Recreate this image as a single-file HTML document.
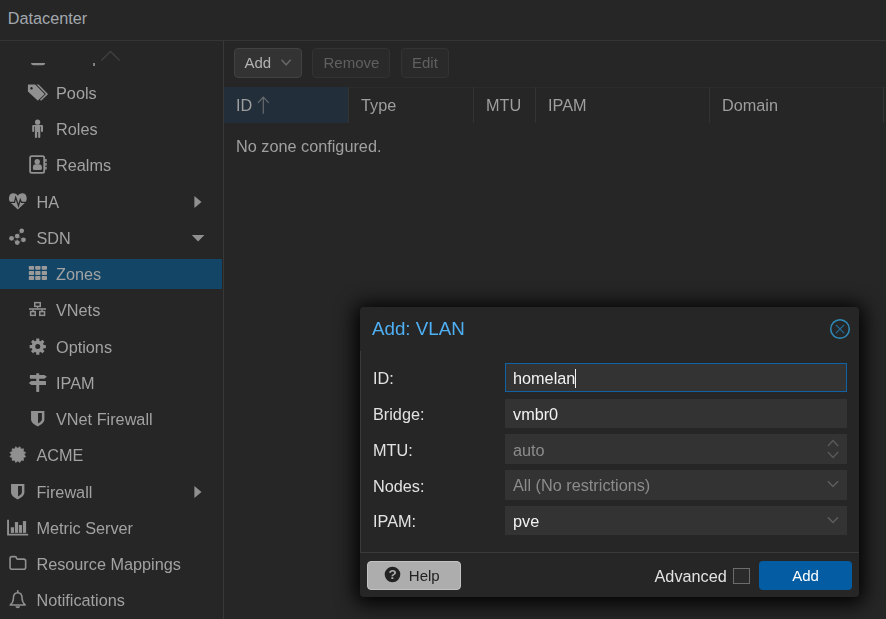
<!DOCTYPE html>
<html>
<head>
<meta charset="utf-8">
<title>Datacenter - SDN Zones</title>
<style>
html,body{margin:0;padding:0;}
body{width:886px;height:619px;overflow:hidden;background:#262626;font-family:"Liberation Sans",Arial,Helvetica,sans-serif;font-size:16.25px;color:#b0b0b0;position:relative;}
*{box-sizing:border-box;}
.abs{position:absolute;}
.gs{will-change:transform;}
#hdr{left:7.7px;top:7px;height:22px;line-height:22px;color:#a2a8ae;font-size:16.25px;white-space:nowrap;}
#hline{left:0;top:40px;width:886px;height:1px;background:#353535;}
#side{left:0;top:41px;width:223px;height:578px;overflow:hidden;}
#sideborder{left:223px;top:41px;width:1px;height:578px;background:#383838;}
#sideclip{left:0;top:21.5px;width:223px;height:557px;overflow:hidden;}
.row{position:absolute;left:0;width:222px;height:36.25px;line-height:36.25px;white-space:nowrap;color:#a2a2a2;}
.row .t{position:absolute;top:0;}
.row.sel{background:#134566;height:30px;line-height:30px;}
.l1 .t{left:36.4px;}
.l2 .t{left:56px;}
#tb{left:224px;top:41px;width:662px;height:46px;}
.btn{position:absolute;height:30px;border:1px solid #424242;border-radius:4px;background:#333333;color:#b2b2b2;line-height:28px;font-size:15px;white-space:nowrap;}
.btn.dis{background:#2a2a2a;border-color:#333333;color:#606060;}
#gridhdr{left:224px;top:87px;width:662px;height:36px;border-top:1px solid #2b2b2b;}
.col{position:absolute;top:-1px;height:36px;line-height:36px;color:#9e9e9e;border-right:1px solid #333333;padding-left:12px;white-space:nowrap;}
#empty{left:236px;top:135px;line-height:22px;color:#a0a0a0;white-space:nowrap;}
#modal{left:360px;top:307px;width:498px;height:289px;}
#mframe{left:-0.5px;top:-0.3px;width:499.5px;height:290.2px;background:#262626;border-radius:4px;box-shadow:0 2px 19px 5px rgba(0,0,0,0.95);}
#mtitle{left:12px;top:10px;line-height:24px;font-size:18.75px;color:#4fb0f4;white-space:nowrap;}
#mbody{left:0;top:44px;width:499px;height:202px;border-left:1px solid #3a3a3a;border-bottom:1px solid #3a3a3a;}
.lab{position:absolute;left:13px;color:#e2e2e2;height:30px;line-height:30px;white-space:nowrap;}
.inp{position:absolute;left:145px;width:342px;height:29px;background:#333333;color:#f2f2f2;line-height:31.4px;padding-left:8px;white-space:nowrap;}
.inp.ph{color:#8c8c8c;}
.inp.foc{border:1px solid #1062a4;line-height:29.6px;padding-left:7px;}
.caret{display:inline-block;width:1px;height:19px;background:#f2f2f2;vertical-align:-4px;margin-left:0;}
#help{left:7px;top:254px;width:94px;height:29px;background:#adadad;border:1px solid #c2c2c2;border-radius:4px;color:#222;font-size:15px;line-height:27px;}
#adv{left:294.5px;top:258px;line-height:22px;color:#e2e2e2;white-space:nowrap;}
#chk{left:373.2px;top:260.8px;width:16.8px;height:16.6px;border:1.5px solid #6c6c6c;background:#2b2b2b;}
#addb{left:399px;top:254px;width:93px;height:29px;background:#045da3;border-radius:4px;color:#fff;font-size:15px;line-height:29px;text-align:center;}
</style>
</head>
<body>
<div id="hdr" class="abs">Datacenter</div>
<div id="hline" class="abs"></div>

<div id="side" class="abs gs">
  <svg class="abs" style="left:95px;top:5px" width="32" height="18" viewBox="95 46 32 18"><polyline points="101.4,60.6 110.5,51.4 119.7,60.6" fill="none" stroke="#3f3f3f" stroke-width="1.4"/></svg>
  <div id="sideclip" class="abs">
    <div class="row l2" style="top:-23.2px"><span class="t">Groups</span></div>
    <div class="row l2" style="top:12.4px"><span class="t">Pools</span></div>
    <div class="row l2" style="top:48.6px"><span class="t">Roles</span></div>
    <div class="row l2" style="top:84.9px"><span class="t">Realms</span></div>
    <div class="row l1" style="top:121.1px"><span class="t">HA</span></div>
    <div class="row l1" style="top:157.4px"><span class="t">SDN</span></div>
    <div class="row l2 sel" style="top:196.5px"><span class="t">Zones</span></div>
    <div class="row l2" style="top:229.9px"><span class="t">VNets</span></div>
    <div class="row l2" style="top:266.1px"><span class="t">Options</span></div>
    <div class="row l2" style="top:302.4px"><span class="t">IPAM</span></div>
    <div class="row l2" style="top:338.6px"><span class="t">VNet Firewall</span></div>
    <div class="row l1" style="top:374.9px"><span class="t">ACME</span></div>
    <div class="row l1" style="top:411.1px"><span class="t">Firewall</span></div>
    <div class="row l1" style="top:447.4px"><span class="t">Metric Server</span></div>
    <div class="row l1" style="top:483.6px"><span class="t">Resource Mappings</span></div>
    <div class="row l1" style="top:519.9px"><span class="t">Notifications</span></div>
    <svg class="abs" style="left:0;top:-0.5px" width="222" height="557" viewBox="0 62 222 557"><g fill="#909090"><rect x="31" y="55" width="14.2" height="10.2" rx="2.5"/><circle cx="38" cy="52" r="3.5"/></g>
<g fill="#909090"><path fill-rule="evenodd" d="M28.6,84.6 H35.2 L44.3,93.7 Q44.7,94.1 44.3,94.5 L38.2,100.2 Q37.6,100.6 37.1,100.1 L27.9,91.4 V85.3 Q27.9,84.6 28.6,84.6 Z M31.5,87 a1.25,1.25 0 1 0 0.01,0 Z"/><path d="M36.6,84.6 H38.6 L47.7,93.7 Q48.1,94.1 47.7,94.5 L41.6,100.2 Q41,100.6 40.4,100.2 L40.0,99.8 L45.4,94.6 Q45.9,94.1 45.4,93.6 Z"/></g>
<g fill="#909090"><circle cx="37.6" cy="122.2" r="2.6"/><path d="M33.4,124.9 H41.8 Q43,124.9 43,126.1 V131 Q43,132 42,132 Q41,132 41,131 V126.6 H40.3 V137.1 Q40.3,138.1 39.2,138.1 Q38.15,138.1 38.15,137.1 V132 H37.15 V137.1 Q37.15,138.1 36.05,138.1 Q34.9,138.1 34.9,137.1 V126.6 H34.2 V131 Q34.2,132 33.2,132 Q32.2,132 32.2,131 V126.1 Q32.2,124.9 33.4,124.9 Z"/></g>
<g fill="#909090"><rect x="30.1" y="156.1" width="14.1" height="16.8" rx="1.6" fill="none" stroke="#909090" stroke-width="1.8"/><rect x="45.1" y="159" width="1.6" height="2.8"/><rect x="45.1" y="162.9" width="1.6" height="2.8"/><rect x="45.1" y="166.7" width="1.6" height="2.8"/><circle cx="37.2" cy="161.8" r="2.7"/><path d="M32.9,168.4 V167.3 Q32.9,164.3 35.9,164.3 H38.9 Q41.9,164.3 41.9,167.3 V168.4 Q41.9,169.9 40.4,169.9 H34.4 Q32.9,169.9 32.9,168.4 Z"/></g>
<g><path fill="#909090" d="M17.85,209.6 L10.4,202.4 C8.0,200.0 8.4,193.3 13.3,193.3 C15.5,193.3 17,194.5 17.85,195.7 C18.7,194.5 20.2,193.3 22.4,193.3 C27.3,193.3 27.7,200.0 25.3,202.4 Z"/><path fill="none" stroke="#262626" stroke-width="1.25" stroke-linejoin="miter" d="M8,202.3 H14.5 L15.7,197.4 L18.5,205.8 L20.3,199.6 L21.4,202.3 H28"/></g>
<g><line x1="21.7" y1="230.8" x2="17.2" y2="236.0" stroke="#6a6a6a" stroke-width="0.7"/><line x1="17.2" y1="236.0" x2="11.5" y2="238.3" stroke="#6a6a6a" stroke-width="0.7"/><line x1="17.2" y1="236.0" x2="23.5" y2="239.8" stroke="#6a6a6a" stroke-width="0.7"/><line x1="17.2" y1="236.0" x2="17.2" y2="242.6" stroke="#6a6a6a" stroke-width="0.7"/><line x1="11.5" y1="238.3" x2="17.2" y2="242.6" stroke="#6a6a6a" stroke-width="0.7"/><line x1="23.5" y1="239.8" x2="17.2" y2="242.6" stroke="#6a6a6a" stroke-width="0.7"/><circle cx="21.7" cy="230.8" r="2.35" fill="#909090"/><circle cx="17.2" cy="236.0" r="2.35" fill="#909090"/><circle cx="11.5" cy="238.3" r="2.35" fill="#909090"/><circle cx="23.5" cy="239.8" r="2.35" fill="#909090"/><circle cx="17.2" cy="242.6" r="2.35" fill="#909090"/></g>
<g fill="#9a9a9a"><rect x="28.8" y="265.9" width="5.3" height="3.9" rx="0.7"/><rect x="28.8" y="271.1" width="5.3" height="3.9" rx="0.7"/><rect x="28.8" y="276.1" width="5.3" height="3.9" rx="0.7"/><rect x="35.2" y="265.9" width="5.3" height="3.9" rx="0.7"/><rect x="35.2" y="271.1" width="5.3" height="3.9" rx="0.7"/><rect x="35.2" y="276.1" width="5.3" height="3.9" rx="0.7"/><rect x="41.7" y="265.9" width="5.3" height="3.9" rx="0.7"/><rect x="41.7" y="271.1" width="5.3" height="3.9" rx="0.7"/><rect x="41.7" y="276.1" width="5.3" height="3.9" rx="0.7"/></g>
<g fill="none" stroke="#909090" stroke-width="1.5"><rect x="34.75" y="302.65" width="5.5" height="3.7"/><rect x="30.65" y="311.65" width="4.6" height="3.7"/><rect x="39.75" y="311.65" width="4.8" height="3.7"/></g><g fill="#909090"><rect x="29" y="308.2" width="17" height="1.6"/><rect x="36.9" y="307" width="1.3" height="1.3"/><rect x="32.2" y="309.7" width="1.6" height="1.3"/><rect x="41.2" y="309.7" width="1.6" height="1.3"/></g>
<g fill="#909090"><path fill-rule="evenodd" d="M31.65,346.6 a6.1,6.1 0 1 0 12.2,0 a6.1,6.1 0 1 0 -12.2,0 Z M35.25,346.6 a2.5,2.5 0 1 1 5.0,0 a2.5,2.5 0 1 1 -5.0,0 Z"/><rect x="36.15" y="338.5" width="3.2" height="3.2" rx="0.5" transform="rotate(0.0 37.75 346.6)"/><rect x="36.15" y="338.5" width="3.2" height="3.2" rx="0.5" transform="rotate(45.0 37.75 346.6)"/><rect x="36.15" y="338.5" width="3.2" height="3.2" rx="0.5" transform="rotate(90.0 37.75 346.6)"/><rect x="36.15" y="338.5" width="3.2" height="3.2" rx="0.5" transform="rotate(135.0 37.75 346.6)"/><rect x="36.15" y="338.5" width="3.2" height="3.2" rx="0.5" transform="rotate(180.0 37.75 346.6)"/><rect x="36.15" y="338.5" width="3.2" height="3.2" rx="0.5" transform="rotate(225.0 37.75 346.6)"/><rect x="36.15" y="338.5" width="3.2" height="3.2" rx="0.5" transform="rotate(270.0 37.75 346.6)"/><rect x="36.15" y="338.5" width="3.2" height="3.2" rx="0.5" transform="rotate(315.0 37.75 346.6)"/></g>
<g fill="#909090"><rect x="36.25" y="373.2" width="2.95" height="18.7" rx="0.6"/><path d="M30.3,374.9 H44.4 L46.9,376.8 L44.4,378.7 H30.3 Q29.9,378.7 29.9,378.3 V375.3 Q29.9,374.9 30.3,374.9 Z"/><path d="M45.6,381 H31.3 L28.8,383.05 L31.3,385.1 H45.6 Q46,385.1 46,384.7 V381.4 Q46,381 45.6,381 Z"/></g><rect x="36" y="378.7" width="3.5" height="0.9" fill="#262626" opacity="0.0"/>
<g transform="translate(0 0)"><path fill="#909090" fill-rule="evenodd" d="M31.05,410.9 H44.4 V419.3 C44.4,422.6 41.2,424.9 37.75,426.4 C34.3,424.9 31.05,422.6 31.05,419.3 Z M38.05,413.1 V423.4 C40.2,422.3 41.9,420.8 41.9,419.2 V413.1 Z"/></g>
<polygon fill="#909090" stroke="#909090" stroke-width="0.6" stroke-linejoin="round" points="19.92,446.68 21.00,449.06 23.60,448.80 23.34,451.40 25.72,452.48 24.20,454.60 25.72,456.72 23.34,457.80 23.60,460.40 21.00,460.14 19.92,462.52 17.80,461.00 15.68,462.52 14.60,460.14 12.00,460.40 12.26,457.80 9.88,456.72 11.40,454.60 9.88,452.48 12.26,451.40 12.00,448.80 14.60,449.06 15.68,446.68 17.80,448.20"/>
<g transform="translate(-20 73)"><path fill="#909090" fill-rule="evenodd" d="M31.05,410.9 H44.4 V419.3 C44.4,422.6 41.2,424.9 37.75,426.4 C34.3,424.9 31.05,422.6 31.05,419.3 Z M38.05,413.1 V423.4 C40.2,422.3 41.9,420.8 41.9,419.2 V413.1 Z"/></g>
<g fill="#909090"><path d="M7.1,519.8 H9.0 V533.8 H28.15 V535.4 H7.1 Z"/><rect x="10.8" y="527.25" width="3.2" height="5.65"/><rect x="14.9" y="522.05" width="3.2" height="10.85"/><rect x="18.9" y="525" width="3.1" height="7.9"/><rect x="22.9" y="521.05" width="3.2" height="11.85"/></g>
<path fill="none" stroke="#909090" stroke-width="1.6" stroke-linejoin="round" d="M12,556.6 H14.8 Q16.5,556.6 16.5,558 Q16.5,559.1 17.8,559.1 H23.7 Q25.65,559.1 25.65,561.1 V567.2 Q25.65,569.2 23.7,569.2 H12 Q10.05,569.2 10.05,567.2 V558.6 Q10.05,556.6 12,556.6 Z"/>
<g><path fill="none" stroke="#909090" stroke-width="1.5" stroke-linejoin="round" d="M17.75,592.8 C14.2,592.8 13.4,596 13.4,598.5 C13.4,601.5 12.2,603.3 10.2,605 H25.3 C23.3,603.3 22.1,601.5 22.1,598.5 C22.1,596 21.3,592.8 17.75,592.8 Z"/><line x1="17.75" y1="590.8" x2="17.75" y2="592.5" stroke="#909090" stroke-width="1.6" stroke-linecap="round"/><path fill="#909090" d="M15.3,606.2 A2.5,2.6 0 0 0 20.2,606.2 Z"/></g>
<g fill="#909090"><polygon points="194.4,195.9 201.5,201.95 194.4,208"/><polygon points="191.8,235 204.4,235 198.1,241.6"/><polygon points="194.4,485.9 201.5,491.95 194.4,498"/></g></svg>
  </div>
</div>
<div id="sideborder" class="abs"></div>

<div id="tb" class="abs gs">
  <div class="btn" style="left:10px;top:7px;width:68px;padding-left:9.5px;">Add<svg class="abs" style="left:45px;top:8px" width="14" height="10" viewBox="0 0 14 10"><polyline points="1.5,2.7 6.1,7.9 10.7,2.7" fill="none" stroke="#666666" stroke-width="1.6"/></svg></div>
  <div class="btn dis" style="left:88px;top:7px;width:78px;padding-left:10.5px;">Remove</div>
  <div class="btn dis" style="left:177px;top:7px;width:48px;padding-left:10px;">Edit</div>
</div>

<div id="gridhdr" class="abs gs">
  <div class="col" style="left:0;width:125px;background:#222f3a;">ID<svg class="abs" style="left:32px;top:8px" width="14" height="20" viewBox="0 0 14 20"><path d="M7.3,2.1 V18.8 M1.9,7.9 L7.3,2.1 L12.7,7.9" fill="none" stroke="#666a6e" stroke-width="1.2"/></svg></div>
  <div class="col" style="left:125px;width:125px;">Type</div>
  <div class="col" style="left:250px;width:62px;">MTU</div>
  <div class="col" style="left:312px;width:174px;">IPAM</div>
  <div class="col" style="left:486px;width:174px;">Domain</div>
</div>
<div id="empty" class="abs gs">No zone configured.</div>

<div id="modal" class="abs gs">
  <div id="mframe" class="abs"></div>
  <div id="mtitle" class="abs">Add: VLAN</div>
  <svg class="abs" style="left:468px;top:10px" width="24" height="24" viewBox="0 0 24 24"><circle cx="12" cy="12" r="9.3" fill="none" stroke="#2f8cba" stroke-width="1.5"/><path d="M7.9,7.9 L16.1,16.1 M16.1,7.9 L7.9,16.1" stroke="#1f6d9c" stroke-width="1.2" fill="none"/></svg>
  <div id="mbody" class="abs"></div>
  <div class="lab" style="top:56px">ID:</div>
  <div class="inp foc" style="top:56px">homelan<span class="caret"></span></div>
  <div class="lab" style="top:92px">Bridge:</div>
  <div class="inp" style="top:92px">vmbr0</div>
  <div class="lab" style="top:128px">MTU:</div>
  <div class="inp ph" style="top:127px;height:29.6px;line-height:33px">auto<svg class="abs" style="left:318px;top:0" width="20" height="30" viewBox="318 0 20 30"><path d="M322.9,12 L328,6.6 L333.1,12 M322.9,18 L328,23.5 L333.1,18" fill="none" stroke="#5a5a5a" stroke-width="1.4"/></svg></div>
  <div class="lab" style="top:164px">Nodes:</div>
  <div class="inp ph" style="top:163px;height:29.8px;line-height:30.6px">All (No restrictions)<svg class="abs" style="left:318px;top:0.4px" width="20" height="29" viewBox="318 0 20 29"><path d="M322.9,11.2 L328,16.6 L333.1,11.2" fill="none" stroke="#5e5e5e" stroke-width="1.4"/></svg></div>
  <div class="lab" style="top:199px">IPAM:</div>
  <div class="inp" style="top:199px">pve<svg class="abs" style="left:318px;top:0" width="20" height="29" viewBox="318 0 20 29"><path d="M322.9,11.2 L328,16.6 L333.1,11.2" fill="none" stroke="#5e5e5e" stroke-width="1.4"/></svg></div>

  <div id="help" class="abs"><svg class="abs" style="left:15.8px;top:3.6px" width="17" height="17" viewBox="0 0 17 17"><circle cx="8.5" cy="8.5" r="7.8" fill="#222"/><text x="8.5" y="13.3" text-anchor="middle" font-family="Liberation Sans, sans-serif" font-weight="bold" font-size="13.5" fill="#adadad">?</text></svg><span class="abs" style="left:40.8px;top:-0.5px">Help</span></div>
  <div id="adv" class="abs">Advanced</div>
  <div id="chk" class="abs"></div>
  <div id="addb" class="abs">Add</div>
</div>
</body>
</html>
